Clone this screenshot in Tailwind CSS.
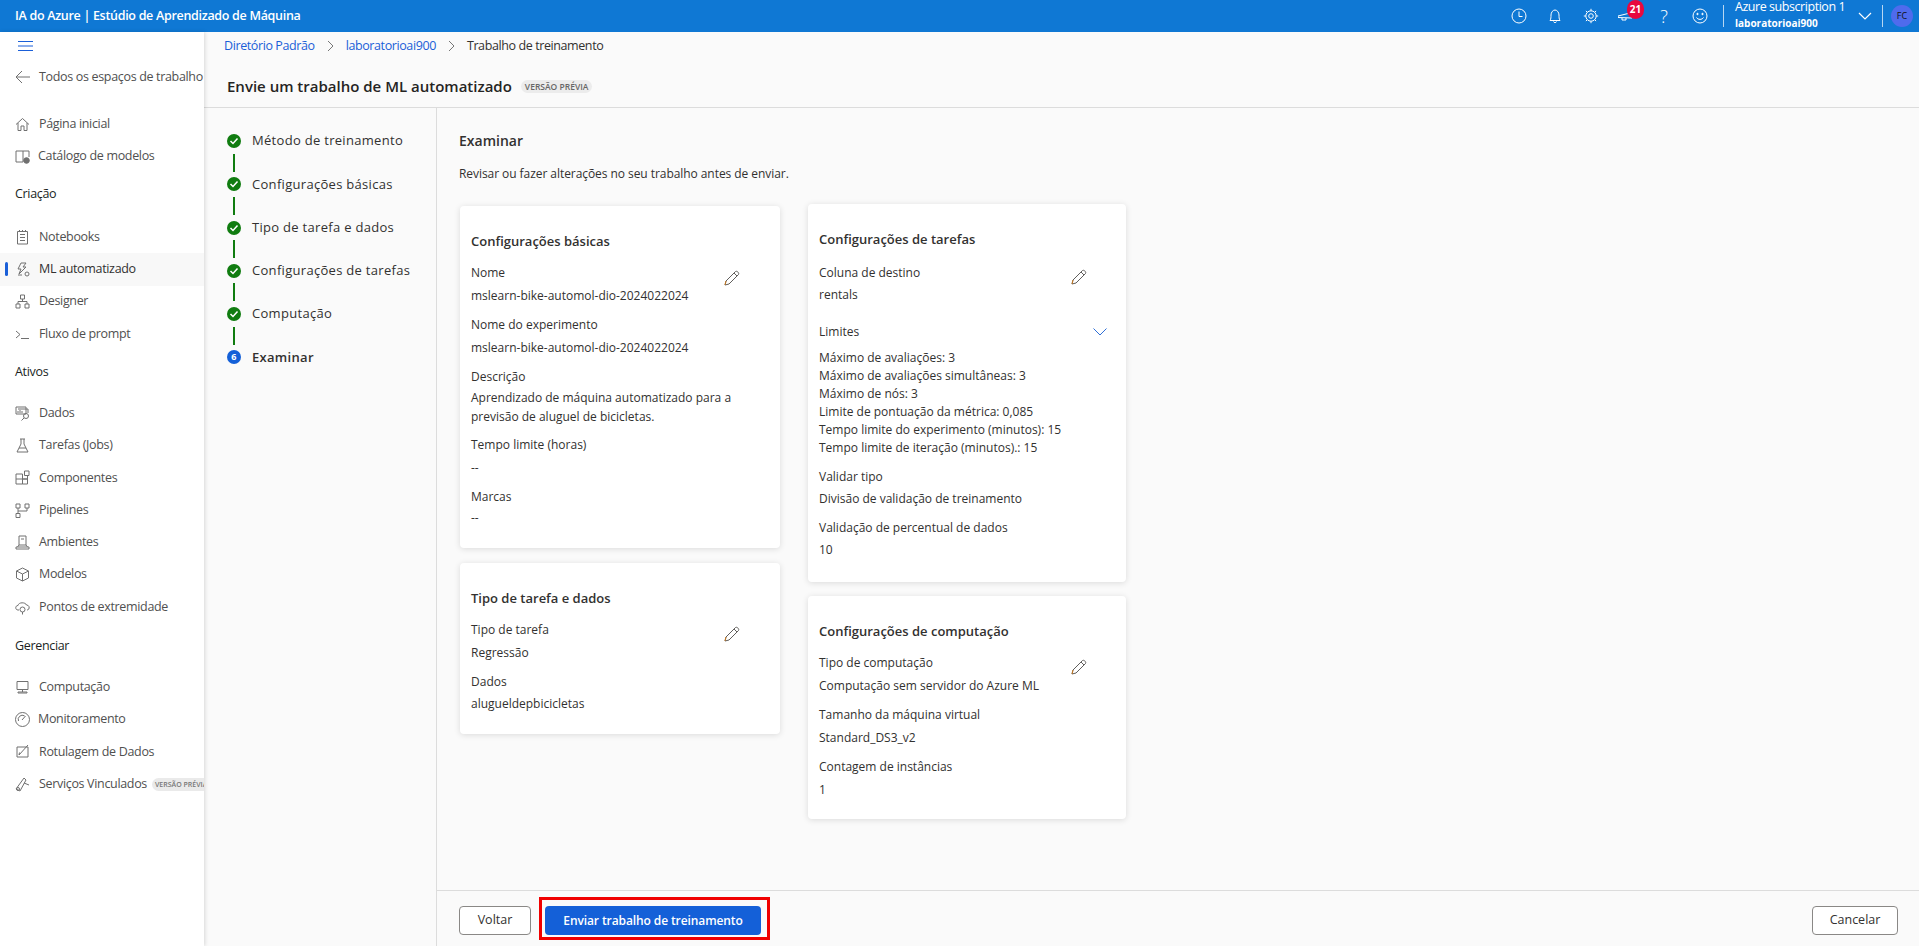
<!DOCTYPE html>
<html lang="pt-BR">
<head>
  <meta charset="UTF-8">
  <title>Estúdio de Aprendizado de Máquina</title>
  <script src="https://cdn.jsdelivr.net/npm/@tailwindcss/browser@4"></script>
</head>
<body class="h-[946px] overflow-hidden bg-[#fafafa] font-['Open_Sans',sans-serif] text-[13px] text-[#323130]">
  <!-- Top bar -->
  <header class="h-8 bg-[#0f78d4] text-white flex items-center">
    <div class="pl-[15px] font-semibold text-[12.5px] tracking-[-0.3px]">IA do Azure | Estúdio de Aprendizado de Máquina</div>
    <div class="ml-auto flex items-center h-8">
      <svg class="w-4 h-4 mr-5" viewBox="0 0 16 16" fill="none" stroke="currentColor"><circle cx="8" cy="8" r="7"/><path d="M8 3.500V8.500H11.500"/></svg>
      <svg class="w-4 h-4 mr-5" viewBox="0 0 16 16" fill="none" stroke="currentColor"><path d="M3 12.500C4 11 4 9 4 7C4 4.500 5.800 2 8 2C10.200 2 12 4.500 12 7C12 9 12 11 13 12.500Z"/><path d="M6.500 13.500C7 15 9 15 9.500 13.500"/></svg>
      <svg class="w-4 h-4 mr-[19px]" viewBox="0 0 16 16" fill="none" stroke="currentColor"><circle cx="8" cy="8" r="2.300"/><circle cx="8" cy="8" r="5.200"/><path d="M8 .8V2.800M8 13.200V15.200M.8 8H2.800M13.200 8H15.200M2.900 2.900L4.300 4.300M11.700 11.700L13.100 13.100M2.900 13.100L4.300 11.700M11.700 4.300L13.100 2.900"/></svg>
      <div class="relative w-4 h-4 mr-[22px]">
        <svg class="w-4 h-4" viewBox="0 0 16 16" fill="none" stroke="currentColor"><path d="M0 8L14 4.500V10L0 9.500Z"/><path d="M4 10V12H8V10"/></svg>
        <span class="absolute -top-[8px] left-[9px] w-[17px] h-[19px] rounded-full bg-[#e8083e] text-[10px] leading-[19px] font-bold text-center">21</span>
      </div>
      <span class="w-4 mr-5 text-[18px] leading-none text-center font-light">?</span>
      <svg class="w-4 h-4 mr-[15px]" viewBox="0 0 16 16" fill="none" stroke="currentColor"><circle cx="8" cy="8" r="7"/><circle cx="5.500" cy="6" r=".7" fill="currentColor"/><circle cx="10.500" cy="6" r=".7" fill="currentColor"/><path d="M4.500 9.500C6 12 10 12 11.500 9.500"/></svg>
      <div class="w-px h-[22px] bg-white/70 mr-[11px]"></div>
      <div class="w-[123px] whitespace-nowrap">
        <div class="text-[12.5px] leading-[17px] tracking-[-0.45px] -mt-[2px]">Azure subscription 1</div>
        <div class="text-[10px] leading-[17px] font-bold">laboratorioai900</div>
      </div>
      <svg class="w-[14px] h-[14px] mr-[10px]" viewBox="0 0 14 14" fill="none" stroke="currentColor" stroke-width="1.200"><path d="M1 4L7 10L13 4"/></svg>
      <div class="w-px h-[22px] bg-white/70 mr-2"></div>
      <div class="w-[22px] h-[22px] rounded-full bg-[#4f6bed] text-[#111] text-[9px] leading-[22px] text-center mr-[6px]">FC</div>
    </div>
  </header>

  <div class="flex h-[914px]">
    <!-- Sidebar -->
    <aside class="w-[204px] shrink-0 bg-white overflow-hidden shadow-[1px_0_4px_rgba(0,0,0,0.14)] z-10 relative text-[12.5px] tracking-[-0.33px] text-[#505050]">
      <svg class="ml-[18px] mt-[8px] w-[15px] h-3" viewBox="0 0 15 12" fill="none" stroke="#1a5fd8"><path d="M0 1.500H15M0 6H15M0 10.500H15"/></svg>
      <div class="flex items-center h-8 mt-[9px] whitespace-nowrap">
        <svg class="ml-[15px] w-[16px] h-[14px] mr-[8px] shrink-0" viewBox="0 0 16 14" fill="none" stroke="#707070"><path d="M15 7H1M7 1L1 7L7 13"/></svg>
        <span>Todos os espaços de trabalho</span>
      </div>
      <nav class="mt-[15px]">
        <a class="flex items-center h-[32.300px] pl-[15px] gap-[9px]"><svg class="w-[15px] h-[15px]" viewBox="0 0 15 15" fill="none" stroke="#707070"><path d="M1 7.500L7.500 1.500L14 7.500M3 6V13.500H6V9H9V13.500H12V6"/></svg>Página inicial</a>
        <a class="flex items-center h-[32.300px] pl-[15px] gap-[8px]"><svg class="w-[15px] h-[15px]" viewBox="0 0 15 15" fill="none" stroke="#707070"><path d="M1 2H8V13H1ZM8 2H14V8"/><circle cx="11.500" cy="11.500" r="2.800" fill="#707070"/></svg>Catálogo de modelos</a>
      </nav>
      <h3 class="pl-[15px] mt-[11.400px] h-5 leading-5 text-[#201f1e]">Criação</h3>
      <nav class="mt-[17px]">
        <a class="flex items-center h-[32.300px] pl-[15px] gap-[9px]"><svg class="w-[15px] h-[15px]" viewBox="0 0 15 15" fill="none" stroke="#707070"><path d="M2.500 1.500H12.500V14H2.500ZM5 4.500H10M5 7.500H10M5 10.500H10M4.500 0V2M7.500 0V2M10.500 0V2"/></svg>Notebooks</a>
        <a class="relative flex items-center h-[32.300px] pl-[15px] gap-[9px] bg-[#f8f8f8] font-medium text-[#323130]"><span class="absolute left-[5px] top-[9px] w-[3px] h-[14px] rounded-sm bg-[#1a5fd8]"></span><svg class="w-[15px] h-[15px]" viewBox="0 0 15 15" fill="none" stroke="#707070"><path d="M6 1H11L8 5H11L4 12L6 7H3Z"/><circle cx="12" cy="12" r="2"/><path d="M3 13H7"/></svg>ML automatizado</a>
        <a class="flex items-center h-[32.300px] pl-[15px] gap-[9px]"><svg class="w-[15px] h-[15px]" viewBox="0 0 15 15" fill="none" stroke="#707070"><path d="M5.500 1H9.500V5H5.500ZM1 10H5V14H1ZM10 10H14V14H10ZM7.500 5V7.500M3 10V7.500H12V10"/></svg>Designer</a>
        <a class="flex items-center h-[32.300px] pl-[15px] gap-[9px]"><svg class="w-[15px] h-[15px]" viewBox="0 0 15 15" fill="none" stroke="#707070"><path d="M1 4L5 7.500L1 11M6 11.500H14"/></svg>Fluxo de prompt</a>
      </nav>
      <h3 class="pl-[15px] mt-[12px] h-5 leading-5 text-[#201f1e]">Ativos</h3>
      <nav class="mt-[15px]">
        <a class="flex items-center h-[32.300px] pl-[15px] gap-[9px]"><svg class="w-[15px] h-[15px]" viewBox="0 0 15 15" fill="none" stroke="#707070"><path d="M1 1H11V8H1ZM3 3H13V7M3 5V7M5 4V7M7 5V7"/><circle cx="11" cy="10" r="2.500"/><path d="M9 12L6.500 14.500"/></svg>Dados</a>
        <a class="flex items-center h-[32.300px] pl-[15px] gap-[9px]"><svg class="w-[15px] h-[15px]" viewBox="0 0 15 15" fill="none" stroke="#707070"><path d="M5 1H10M6 1V6L2 14H13L9 6V1M4 10H11"/></svg>Tarefas (Jobs)</a>
        <a class="flex items-center h-[32.300px] pl-[15px] gap-[9px]"><svg class="w-[15px] h-[15px]" viewBox="0 0 15 15" fill="none" stroke="#707070"><path d="M1 4H7.500V14H1ZM1 9H12.500V14H7.500M9.500 1H14V5.500H9.500ZM7.500 9H12.500V6"/></svg>Componentes</a>
        <a class="flex items-center h-[32.300px] pl-[15px] gap-[9px]"><svg class="w-[15px] h-[15px]" viewBox="0 0 15 15" fill="none" stroke="#707070"><path d="M1 1H5V5H1ZM10 1H14V5H10ZM1 10.500H5V14.500H1ZM3 5V10.500M12 5V8H3"/></svg>Pipelines</a>
        <a class="flex items-center h-[32.300px] pl-[15px] gap-[9px]"><svg class="w-[15px] h-[15px]" viewBox="0 0 15 15" fill="none" stroke="#707070"><path d="M4 1H11V10H4ZM1 14H14V12H1ZM2.500 12L4 10M12.500 12L11 10M6 4H9"/></svg>Ambientes</a>
        <a class="flex items-center h-[32.300px] pl-[15px] gap-[9px]"><svg class="w-[15px] h-[15px]" viewBox="0 0 15 15" fill="none" stroke="#707070"><path d="M7.500 1L13.500 4V11L7.500 14L1.500 11V4ZM1.500 4L7.500 7L13.500 4M7.500 7V14"/></svg>Modelos</a>
        <a class="flex items-center h-[32.300px] pl-[15px] gap-[9px]"><svg class="w-[15px] h-[15px]" viewBox="0 0 15 15" fill="none" stroke="#707070"><path d="M4 10H3C0 10 0 5.500 3 5.500C3.500 2 10.500 2 11.500 5C15 5 15 10 12 10"/><circle cx="7.500" cy="9.500" r="2.500"/><path d="M7.500 12V14.500"/></svg>Pontos de extremidade</a>
      </nav>
      <h3 class="pl-[15px] mt-[13px] h-5 leading-5 text-[#201f1e]">Gerenciar</h3>
      <nav class="mt-[15px]">
        <a class="flex items-center h-[32.300px] pl-[15px] gap-[9px]"><svg class="w-[15px] h-[15px]" viewBox="0 0 15 15" fill="none" stroke="#707070"><path d="M2 1.500H13V9.500H2ZM7.500 9.500V12M3 13H12V12H3Z"/></svg>Computação</a>
        <a class="flex items-center h-[32.300px] pl-[15px] gap-[8px]"><svg class="w-[15px] h-[15px]" viewBox="0 0 15 15" fill="none" stroke="#707070"><circle cx="7.500" cy="7.500" r="7"/><path d="M3.500 9A4.200 4.200 0 0 1 9.500 3.800"/><path d="M7 8L10.500 4"/></svg>Monitoramento</a>
        <a class="flex items-center h-[32.300px] pl-[15px] gap-[9px]"><svg class="w-[15px] h-[15px]" viewBox="0 0 15 15" fill="none" stroke="#707070"><path d="M2 3H13V13H2ZM4 11L13 1M4 11L4.500 8.500"/></svg>Rotulagem de Dados</a>
        <a class="flex items-center h-[32.300px] pl-[15px] gap-[9px] whitespace-nowrap"><svg class="w-[15px] h-[15px] shrink-0" viewBox="0 0 15 15" fill="none" stroke="#707070"><path d="M1 12L5 14L11 3L9 1ZM9 6L14 8"/><circle cx="3" cy="12" r="1.500"/></svg>Serviços Vinculados<span class="-ml-[4px] px-[3px] rounded-lg bg-[#eaeaea] text-[7px] tracking-normal leading-[13px] font-semibold text-[#777]">VERSÃO PRÉVIA</span></a>
      </nav>
    </aside>

    <!-- Main -->
    <main class="flex-1 min-w-0 flex flex-col">
      <div class="h-[76px] shrink-0 border-b border-[#dcdcdc] pl-[20px]">
        <div class="flex items-center h-7 text-[12.5px] tracking-[-0.4px]">
          <span class="text-[#1a5fd8]">Diretório Padrão</span>
          <svg class="w-[7px] h-[10px] mx-[12px]" viewBox="0 0 7 10" fill="none" stroke="#777"><path d="M1 0L6 5L1 10"/></svg>
          <span class="text-[#1a5fd8]">laboratorioai900</span>
          <svg class="w-[7px] h-[10px] mx-[12px]" viewBox="0 0 7 10" fill="none" stroke="#777"><path d="M1 0L6 5L1 10"/></svg>
          <span>Trabalho de treinamento</span>
        </div>
        <div class="flex items-center h-6 mt-[14px] pl-[3px]">
          <h1 class="text-[15px] font-semibold text-[#252423]">Envie um trabalho de ML automatizado</h1>
          <span class="ml-[9px] px-[4px] rounded-lg bg-[#ececec] text-[8.500px] leading-[13px] font-semibold text-[#666]">VERSÃO PRÉVIA</span>
        </div>
      </div>

      <div class="flex-1 min-h-0 flex">
        <!-- Stepper -->
        <div class="w-[233px] shrink-0 border-r border-[#dcdcdc] pl-[23px] pt-[26px]">
          <ol class="tracking-[0.3px]">
            <li class="flex items-center h-[14px] gap-[11px]"><svg class="w-[14px] h-[14px]" viewBox="0 0 14 14"><circle cx="7" cy="7" r="7" fill="#107c10"/><path d="M3.500 7L6 9.500L10.500 4.500" fill="none" stroke="#fff" stroke-width="1.500"/></svg>Método de treinamento</li>
            <li class="w-[2px] h-[18px] my-[5.650px] ml-[6px] bg-[#107c10]"></li>
            <li class="flex items-center h-[14px] gap-[11px]"><svg class="w-[14px] h-[14px]" viewBox="0 0 14 14"><circle cx="7" cy="7" r="7" fill="#107c10"/><path d="M3.500 7L6 9.500L10.500 4.500" fill="none" stroke="#fff" stroke-width="1.500"/></svg>Configurações básicas</li>
            <li class="w-[2px] h-[18px] my-[5.650px] ml-[6px] bg-[#107c10]"></li>
            <li class="flex items-center h-[14px] gap-[11px]"><svg class="w-[14px] h-[14px]" viewBox="0 0 14 14"><circle cx="7" cy="7" r="7" fill="#107c10"/><path d="M3.500 7L6 9.500L10.500 4.500" fill="none" stroke="#fff" stroke-width="1.500"/></svg>Tipo de tarefa e dados</li>
            <li class="w-[2px] h-[18px] my-[5.650px] ml-[6px] bg-[#107c10]"></li>
            <li class="flex items-center h-[14px] gap-[11px]"><svg class="w-[14px] h-[14px]" viewBox="0 0 14 14"><circle cx="7" cy="7" r="7" fill="#107c10"/><path d="M3.500 7L6 9.500L10.500 4.500" fill="none" stroke="#fff" stroke-width="1.500"/></svg>Configurações de tarefas</li>
            <li class="w-[2px] h-[18px] my-[5.650px] ml-[6px] bg-[#107c10]"></li>
            <li class="flex items-center h-[14px] gap-[11px]"><svg class="w-[14px] h-[14px]" viewBox="0 0 14 14"><circle cx="7" cy="7" r="7" fill="#107c10"/><path d="M3.500 7L6 9.500L10.500 4.500" fill="none" stroke="#fff" stroke-width="1.500"/></svg>Computação</li>
            <li class="w-[2px] h-[18px] my-[5.650px] ml-[6px] bg-[#107c10]"></li>
            <li class="flex items-center h-[14px] gap-[11px] font-semibold"><span class="w-[14px] h-[14px] rounded-full bg-[#1460d8] text-white text-[9px] leading-[14px] text-center font-bold">6</span>Examinar</li>
          </ol>
        </div>

        <!-- Review pane -->
        <div class="flex-1 min-w-0 flex flex-col">
          <div class="flex-1 min-h-0 pl-[23px] pt-[23px]">
            <h2 class="text-[14px] leading-5 font-semibold -ml-px">Examinar</h2>
            <p class="mt-[13px] leading-5 text-[12px] tracking-[-0.06px] -ml-px">Revisar ou fazer alterações no seu trabalho antes de enviar.</p>
            <div class="flex gap-7 items-start">
              <!-- Left column -->
              <div class="w-[320px] mt-[22px] flex flex-col gap-[15px]">
                <section class="h-[342px] bg-white rounded-sm shadow-[0_1px_6px_rgba(0,0,0,0.13)] pl-[11px] pt-[25px] text-[12px]">
                  <h3 class="text-[13px] leading-5 font-semibold mb-[12px]">Configurações básicas</h3>
                  <div class="flex justify-between pr-[40px]">
                    <div>
                      <div class="leading-5 font-medium mb-[3px]">Nome</div>
                      <div class="leading-5 mb-[9px]">mslearn-bike-automol-dio-2024022024</div>
                    </div>
                    <svg class="w-4 h-4 mt-[7px]" viewBox="0 0 16 16" fill="none" stroke="#605e5c"><path d="M1 15L2 11L11.500 1.500C13 .5 15.500 3 14.500 4.500L5 14ZM10 3L13 6" /><path d="M1 15L2 11" stroke="#c8781e"/></svg>
                  </div>
                  <div class="leading-5 font-medium mb-[3px]">Nome do experimento</div>
                  <div class="leading-5 mb-[9px]">mslearn-bike-automol-dio-2024022024</div>
                  <div class="leading-5 font-medium mb-[1px]">Descrição</div>
                  <div class="leading-[19px] mb-[9px] w-[285px]">Aprendizado de máquina automatizado para a previsão de aluguel de bicicletas.</div>
                  <div class="leading-5 font-medium mb-[3px]">Tempo limite (horas)</div>
                  <div class="leading-5 mb-[9px]">--</div>
                  <div class="leading-5 font-medium mb-[1px]">Marcas</div>
                  <div class="leading-5">--</div>
                </section>
                <section class="h-[171px] bg-white rounded-sm shadow-[0_1px_6px_rgba(0,0,0,0.13)] pl-[11px] pt-[25px] text-[12px]">
                  <h3 class="text-[13px] leading-5 font-semibold mb-[12px]">Tipo de tarefa e dados</h3>
                  <div class="flex justify-between pr-[40px]">
                    <div>
                      <div class="leading-5 font-medium mb-[3px]">Tipo de tarefa</div>
                      <div class="leading-5 mb-[9px]">Regressão</div>
                    </div>
                    <svg class="w-4 h-4 mt-[6px]" viewBox="0 0 16 16" fill="none" stroke="#605e5c"><path d="M1 15L2 11L11.500 1.500C13 .5 15.500 3 14.500 4.500L5 14ZM10 3L13 6" /><path d="M1 15L2 11" stroke="#c8781e"/></svg>
                  </div>
                  <div class="leading-5 font-medium mb-[2px]">Dados</div>
                  <div class="leading-5">alugueldepbicicletas</div>
                </section>
              </div>
              <!-- Right column -->
              <div class="w-[318px] mt-[20px] flex flex-col gap-[14px]">
                <section class="h-[378px] bg-white rounded-sm shadow-[0_1px_6px_rgba(0,0,0,0.13)] pl-[11px] pt-[25px] text-[12px]">
                  <h3 class="text-[13px] leading-5 font-semibold mb-[14px]">Configurações de tarefas</h3>
                  <div class="flex justify-between pr-[39px]">
                    <div>
                      <div class="leading-5 font-medium mb-[2px]">Coluna de destino</div>
                      <div class="leading-5">rentals</div>
                    </div>
                    <svg class="w-4 h-4 mt-[6px]" viewBox="0 0 16 16" fill="none" stroke="#605e5c"><path d="M1 15L2 11L11.500 1.500C13 .5 15.500 3 14.500 4.500L5 14ZM10 3L13 6" /><path d="M1 15L2 11" stroke="#c8781e"/></svg>
                  </div>
                  <div class="flex justify-between items-center pr-[19px] mt-[17px] h-5 font-medium">Limites<svg class="w-[14px] h-2" viewBox="0 0 14 8" fill="none" stroke="#2f6fd6"><path d="M.5 .5L7 7L13.500 .5"/></svg></div>
                  <ul class="mt-[7px] leading-[18px] mb-[10px]">
                    <li>Máximo de avaliações: 3</li>
                    <li>Máximo de avaliações simultâneas: 3</li>
                    <li>Máximo de nós: 3</li>
                    <li>Limite de pontuação da métrica: 0,085</li>
                    <li>Tempo limite do experimento (minutos): 15</li>
                    <li>Tempo limite de iteração (minutos).: 15</li>
                  </ul>
                  <div class="leading-5 font-medium mb-[2px]">Validar tipo</div>
                  <div class="leading-5 mb-[9px]">Divisão de validação de treinamento</div>
                  <div class="leading-5 font-medium mb-[2px]">Validação de percentual de dados</div>
                  <div class="leading-5">10</div>
                </section>
                <section class="h-[223px] bg-white rounded-sm shadow-[0_1px_6px_rgba(0,0,0,0.13)] pl-[11px] pt-[25px] text-[12px]">
                  <h3 class="text-[13px] leading-5 font-semibold mb-[12px]">Configurações de computação</h3>
                  <div class="flex justify-between pr-[39px]">
                    <div>
                      <div class="leading-5 font-medium mb-[3px]">Tipo de computação</div>
                      <div class="leading-5 mb-[9px]">Computação sem servidor do Azure ML</div>
                    </div>
                    <svg class="w-4 h-4 mt-[6px]" viewBox="0 0 16 16" fill="none" stroke="#605e5c"><path d="M1 15L2 11L11.500 1.500C13 .5 15.500 3 14.500 4.500L5 14ZM10 3L13 6" /><path d="M1 15L2 11" stroke="#c8781e"/></svg>
                  </div>
                  <div class="leading-5 font-medium mb-[3px]">Tamanho da máquina virtual</div>
                  <div class="leading-5 mb-[9px]">Standard_DS3_v2</div>
                  <div class="leading-5 font-medium mb-[3px]">Contagem de instâncias</div>
                  <div class="leading-5">1</div>
                </section>
              </div>
            </div>
          </div>
          <!-- Footer -->
          <footer class="h-[56px] shrink-0 border-t border-[#dcdcdc] flex items-end pl-[22px] pr-[21px] pb-[6px]">
            <button class="w-[72px] h-[29px] mb-[5px] rounded-sm border border-[#8a8886] bg-white text-[12.500px] font-medium">Voltar</button>
            <div class="ml-[8px] border-[3px] border-[#f00000] pl-[3px] pr-[6px] pt-[6px] pb-[2px]">
              <button class="block w-[216px] h-[29px] rounded-sm bg-[#1460d8] text-white text-[12px] font-semibold tracking-[-0.1px]">Enviar trabalho de treinamento</button>
            </div>
            <button class="ml-auto w-[86px] h-[29px] mb-[5px] rounded-sm border border-[#8a8886] bg-white text-[12.500px] font-medium">Cancelar</button>
          </footer>
        </div>
      </div>
    </main>
  </div>
</body>
</html>
